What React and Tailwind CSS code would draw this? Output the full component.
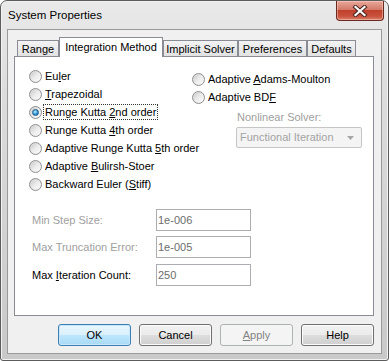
import React from "react";

function U({ children }) {
  return <span className="underline decoration-1 underline-offset-[1px]">{children}</span>;
}

function Radio({ checked, focus, children }) {
  return (
    <div className="flex items-center h-[18px] whitespace-nowrap">
      <span className="relative w-[13px] h-[13px] shrink-0 rounded-full border border-[#8e8f8f] bg-gradient-to-br from-[#d4d4d4] to-[#fbfbfb] flex items-center justify-center">
        <span className="w-[9px] h-[9px] rounded-full bg-gradient-to-br from-[#cdcdcd] via-[#ececec] to-[#fafafa]" />
        {checked && (
          <span className="absolute left-[2px] top-[2px] w-[7px] h-[7px] rounded-full border border-[#1d5a8a] bg-[radial-gradient(circle_at_40%_35%,#c4ecfd,#3aa2dc_50%,#0e5190)]" />
        )}
      </span>
      <span
        className={
          "ml-[1px] px-[1px] h-[16px] leading-[14px] border whitespace-nowrap " +
          (focus ? "border-dotted border-[#333]" : "border-transparent")
        }
      >
        {children}
      </span>
    </div>
  );
}

function Field({ label, value, disabled }) {
  return (
    <div className="flex items-center h-[22px]">
      <span className={"w-[124px] " + (disabled ? "text-[#a0a0a0]" : "text-black")}>{label}</span>
      <div className="w-[95px] h-[22px] border border-[#abadb3] bg-white pl-[1px] flex items-center text-[#6d6d6d]">
        {value}
      </div>
    </div>
  );
}

function Btn({ children, def, disabled }) {
  let cls =
    "w-[73px] h-[22px] rounded-[3px] border flex items-center justify-center ";
  if (def)
    cls += "border-[#3c7fb1] bg-[linear-gradient(to_bottom,#eaf6fd,#d9f0fc_50%,#bee6fd_51%,#a7d9f5)] shadow-[inset_0_0_0_1px_#c8e8fa] text-black";
  else if (disabled) cls += "border-[#adb2b5] bg-[#f4f4f4] text-[#838383]";
  else
    cls += "border-[#707070] bg-[linear-gradient(to_bottom,#f2f2f2,#ebebeb_50%,#dddddd_51%,#cfcfcf)] shadow-[inset_0_0_0_1px_#fcfcfc] text-black";
  return <div className={cls}>{children}</div>;
}

function Tab({ w, selected, children }) {
  if (selected)
    return (
      <div
        className={
          "relative z-10 h-[20px] -mb-[1px] border border-b-0 border-[#898c95] bg-white flex items-start justify-center pt-[3px] leading-[13px] whitespace-nowrap " +
          w
        }
      >
        {children}
      </div>
    );
  return (
    <div
      className={
        "h-[16px] border border-b-0 border-[#898c95] bg-gradient-to-b from-[#f3f3f3] to-[#e2e2e2] flex items-start justify-center pt-[2px] leading-[13px] whitespace-nowrap " +
        w
      }
    >
      {children}
    </div>
  );
}

export default function App() {
  return (
    <div className="w-[389px] h-[361px] bg-white font-['Liberation_Sans',Arial,sans-serif] text-[11px] text-black">
      <div className="relative w-[389px] h-[361px] rounded-t-[7px] rounded-b-[3px] border border-[#5c5c5c] bg-[linear-gradient(to_bottom,#e9e9e9,#dddddd_25%,#d3d3d3_60%,#c9c9c9)] shadow-[inset_0_0_0_1px_#f2f2f2] flex flex-col">
        {/* title bar */}
        <div className="h-[28px] flex items-start justify-between">
          <div className="pl-[7px] pt-[7px] text-[11.5px] leading-[14px] text-black">System Properties</div>
          <div className="mr-[4px] w-[48px] h-[20px] rounded-b-[4px] border border-t-0 border-[#6b2a20] bg-[linear-gradient(to_bottom,#e9a99c,#d47a68_45%,#c0412c_50%,#c9523d_80%,#d9806a)] shadow-[inset_0_0_0_1px_rgba(255,220,210,0.45)] flex items-center justify-center">
            <svg width="16" height="12" viewBox="0 0 16 12">
              <path d="M3.5 2 L12.5 10 M12.5 2 L3.5 10" stroke="#4a2620" strokeWidth="4.2" strokeLinecap="square" />
              <path d="M3.5 2 L12.5 10 M12.5 2 L3.5 10" stroke="#ffffff" strokeWidth="2.2" strokeLinecap="square" />
            </svg>
          </div>
        </div>

        {/* client area */}
        <div className="mx-[6px] mb-[6px] flex-1 border border-[#9a9a9a] bg-[#f0f0f0] flex flex-col pl-[6px] pr-[7px]">
          {/* tab row */}
          <div className="h-[26px] flex items-end pl-[3px]">
            <Tab w="w-[42px]">Range</Tab>
            <Tab w="w-[104px]" selected>Integration Method</Tab>
            <Tab w="w-[75px]">Implicit Solver</Tab>
            <Tab w="w-[69px]">Preferences</Tab>
            <Tab w="w-[49px]">Defaults</Tab>
          </div>

          {/* panel */}
          <div className="h-[260px] border border-[#898c95] bg-white flex flex-col">
            <div className="flex">
              <div className="w-[177px] shrink-0 pl-[14px] pt-[10px] flex flex-col">
                <Radio>Eu<U>l</U>er</Radio>
                <Radio><U>T</U>rapezoidal</Radio>
                <Radio checked focus>Runge Kutta <U>2</U>nd order</Radio>
                <Radio>Runge Kutta <U>4</U>th order</Radio>
                <Radio>Adaptive Runge Kutta <U>5</U>th order</Radio>
                <Radio>Adaptive <U>B</U>ulirsh-Stoer</Radio>
                <Radio>Backward Euler (<U>S</U>tiff)</Radio>
              </div>
              <div className="pt-[13px] flex flex-col">
                <Radio>Adaptive <U>A</U>dams-Moulton</Radio>
                <Radio>Adaptive BD<U>F</U></Radio>
                <div className="mt-[4px] pl-[45px] h-[14px] leading-[14px] text-[#a0a0a0] whitespace-nowrap">Nonlinear Solver:</div>
                <div className="ml-[44px] mt-[3px] w-[126px] h-[21px] border border-[#c5c5c5] rounded-[2px] bg-[#f4f4f4] flex items-center justify-between pl-[3px] pr-[7px] text-[#a3a3a3] whitespace-nowrap">
                  <span>Functional Iteration</span>
                  <svg width="7" height="4" viewBox="0 0 7 4">
                    <path d="M0 0 H7 L3.5 4 Z" fill="#a6a6a6" />
                  </svg>
                </div>
              </div>
            </div>

            <div className="mt-[16px] pl-[17px] flex flex-col gap-[5px]">
              <Field label="Min Step Size:" value="1e-006" disabled />
              <Field label="Max Truncation Error:" value="1e-005" disabled />
              <div className="mt-[1px]">
                <Field label={<>Max <U>I</U>teration Count:</>} value="250" />
              </div>
            </div>
          </div>

          {/* buttons */}
          <div className="mt-[8px] flex justify-end gap-[8px]">
            <Btn def>OK</Btn>
            <Btn>Cancel</Btn>
            <Btn disabled><U>A</U>pply</Btn>
            <Btn>Help</Btn>
          </div>
        </div>
      </div>
    </div>
  );
}
